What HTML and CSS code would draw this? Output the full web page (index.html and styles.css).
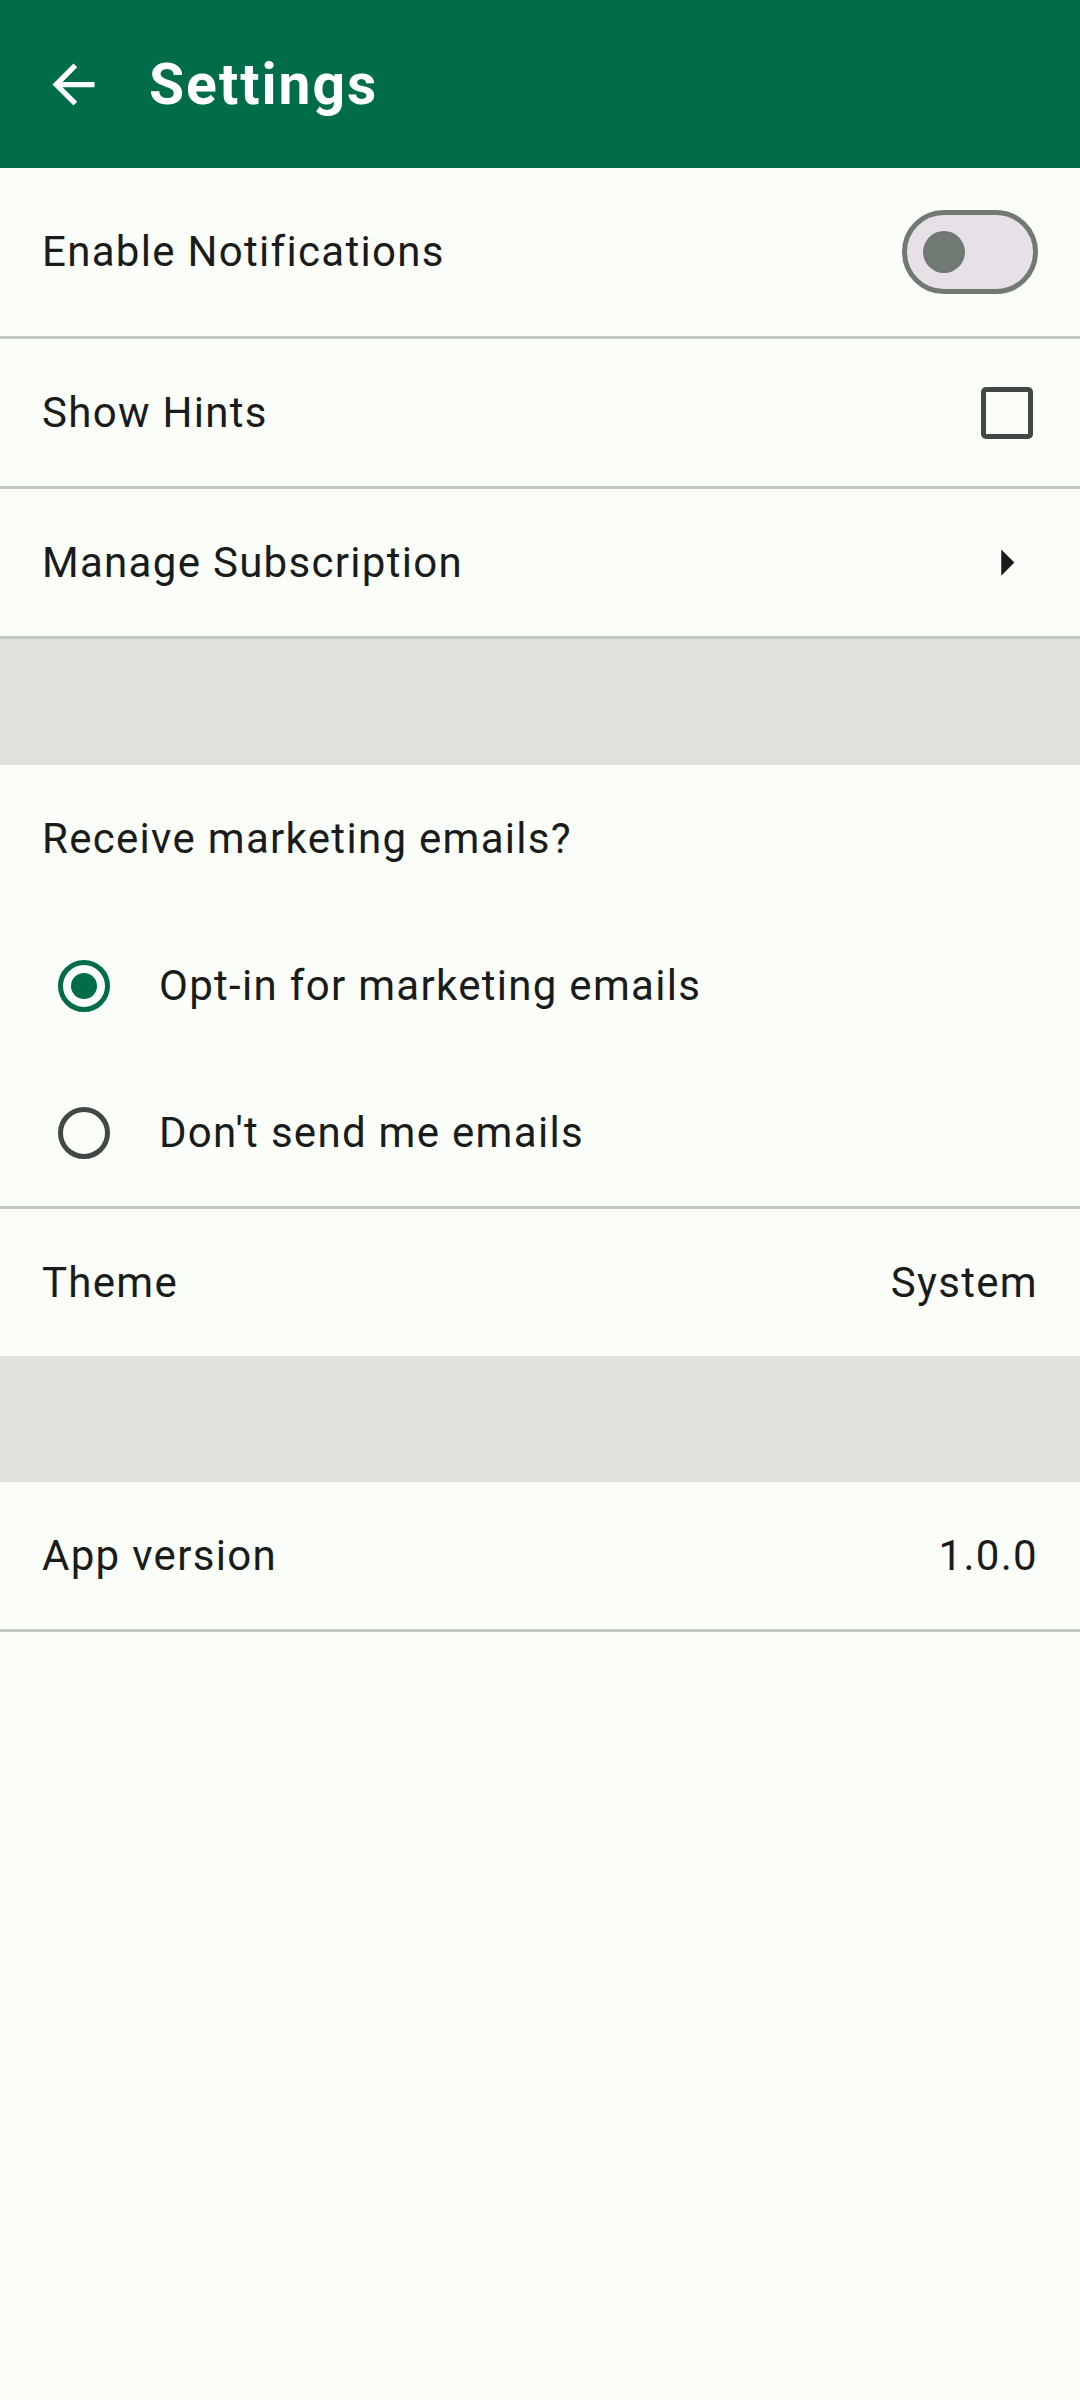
FILE: index.html
```html
<!DOCTYPE html>
<html lang="en">
<head>
<meta charset="utf-8">
<title>Settings</title>
<link rel="stylesheet" href="styles.css">
</head>
<body>
<div class="app">
  <header class="topbar">
    <span class="nav-icon">
      <svg viewBox="0 0 24 24" width="63" height="63"><path d="M20 11H7.83l5.59-5.59L12 4l-8 8 8 8 1.41-1.41L7.83 13H20v-2z"/></svg>
    </span>
    <h1 class="title">Settings</h1>
  </header>

  <div class="row row-switch">
    <span class="label">Enable Notifications</span>
    <span class="switch"><span class="thumb"></span></span>
  </div>
  <div class="divider"></div>

  <div class="row">
    <span class="label">Show Hints</span>
    <span class="icon-box"><span class="checkbox"></span></span>
  </div>
  <div class="divider"></div>

  <div class="row">
    <span class="label">Manage Subscription</span>
    <span class="icon-box">
      <svg viewBox="0 0 24 24" width="63" height="63"><path d="M10 17l5-5-5-5v10z"/></svg>
    </span>
  </div>
  <div class="divider"></div>

  <div class="spacer"></div>

  <div class="row">
    <span class="label">Receive marketing emails?</span>
  </div>
  <div class="radio-row">
    <span class="radio-box"><span class="radio checked"><span class="dot"></span></span></span>
    <span class="label">Opt-in for marketing emails</span>
  </div>
  <div class="radio-row">
    <span class="radio-box"><span class="radio"></span></span>
    <span class="label">Don't send me emails</span>
  </div>
  <div class="divider"></div>

  <div class="row">
    <span class="label">Theme</span>
    <span class="value">System</span>
  </div>

  <div class="spacer"></div>

  <div class="row">
    <span class="label">App version</span>
    <span class="value">1.0.0</span>
  </div>
  <div class="divider"></div>
</div>
</body>
</html>
```

FILE: styles.css
```css
html, body {
  margin: 0;
  padding: 0;
}

body {
  background: #fbfdf8;
  font-family: Roboto, "Noto Sans", "Liberation Sans", sans-serif;
  color: #191c1a;
  width: 1080px;
  min-height: 2400px;
}

.app {
  display: flex;
  flex-direction: column;
}

.topbar {
  height: 168px;
  background: #006c4a;
  display: flex;
  align-items: center;
  padding-left: 42px;
  box-sizing: border-box;
}

.nav-icon {
  width: 63px;
  height: 63px;
  display: flex;
}

.nav-icon svg {
  fill: #ffffff;
}

.title {
  margin: 0 0 0 44px;
  font-size: 57px;
  font-weight: 700;
  color: #ffffff;
  letter-spacing: 2px;
  line-height: 1;
}

.row {
  height: 147px;
  display: flex;
  align-items: center;
  justify-content: space-between;
  padding: 0 42px;
  box-sizing: border-box;
}

.row-switch {
  height: 168px;
}

.label,
.value {
  font-size: 42px;
  letter-spacing: 1.3px;
  line-height: 1;
  color: #191c1a;
}

.divider {
  height: 3px;
  background: #c2c9c1;
}

.spacer {
  height: 126px;
  background: #e0e0dc;
}

.switch {
  width: 136px;
  height: 84px;
  box-sizing: border-box;
  border: 5px solid #717973;
  border-radius: 42px;
  background: #e6e1e6;
  display: flex;
  align-items: center;
  padding-left: 16px;
}

.thumb {
  width: 42px;
  height: 42px;
  border-radius: 50%;
  background: #717973;
}

.icon-box {
  width: 63px;
  height: 63px;
  display: flex;
  align-items: center;
  justify-content: center;
}

.icon-box svg {
  fill: #191c1a;
}

.checkbox {
  width: 52px;
  height: 52px;
  box-sizing: border-box;
  border: 5px solid #404943;
  border-radius: 5px;
}

.radio-row {
  height: 147px;
  display: flex;
  align-items: center;
  padding-left: 21px;
}

.radio-box {
  width: 126px;
  height: 126px;
  display: flex;
  align-items: center;
  justify-content: center;
  margin-right: 12px;
}

.radio {
  width: 52px;
  height: 52px;
  box-sizing: border-box;
  border: 5px solid #404943;
  border-radius: 50%;
  display: flex;
  align-items: center;
  justify-content: center;
}

.radio.checked {
  border-color: #006c4a;
}

.dot {
  width: 26px;
  height: 26px;
  border-radius: 50%;
  background: #006c4a;
}
```
